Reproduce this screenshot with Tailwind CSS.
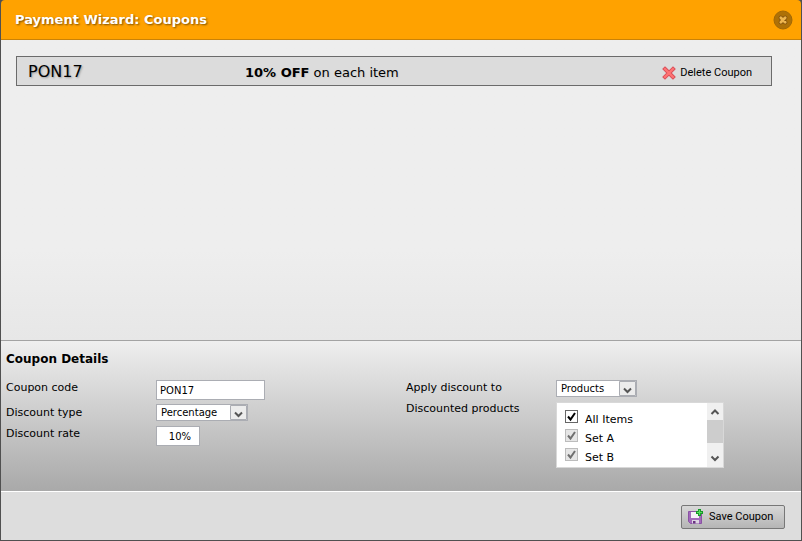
<!DOCTYPE html>
<html lang="en">
<head>
<meta charset="utf-8">
<title>Payment Wizard: Coupons</title>
<script src="https://cdn.jsdelivr.net/npm/@tailwindcss/browser@4"></script>
</head>
<body class="min-h-screen bg-[#505050] font-['Verdana','DejaVu_Sans',sans-serif] text-black">
<div class="flex min-h-screen flex-col px-px pb-px">
  <header class="flex h-10 items-center justify-between rounded-t border-b border-[#c98208] bg-[#ffa200] pr-2 pl-3.5">
    <h1 class="text-[13px] font-bold text-white [text-shadow:1px_1px_2px_#7a4d00]">Payment Wizard: Coupons</h1>
    <button type="button" aria-label="Close" class="size-5">
      <svg viewBox="0 0 20 20" class="size-5"><circle cx="10" cy="10" r="9" fill="#ae7107" stroke="#a16806"/><path d="M7.800 7.800l4.400 4.400M12.200 7.800l-4.400 4.400" stroke="#80500a" stroke-width="4.400" stroke-linecap="round"/><path d="M7.800 7.800l4.400 4.400M12.200 7.800l-4.400 4.400" stroke="#eeb54e" stroke-width="2.800" stroke-linecap="round"/></svg>
    </button>
  </header>

  <main class="flex-1 bg-linear-to-b from-[#eeeeee] from-70% to-[#e7e7e7] pt-4 pr-[29px] pl-[15px]">
    <div class="flex h-[30px] items-center border border-[#6b6b6b] bg-[#dcdcdc] pr-[19px] pl-[11px]">
      <span class="w-[217px] pt-px text-base [text-shadow:1px_1px_2px_#999]">PON17</span>
      <span class="flex-1 pt-1 text-[13px] [text-shadow:1px_1px_1px_#ccc]"><b>10% OFF</b> on each item</span>
      <button type="button" class="flex items-center gap-1 pt-1 font-['Roboto',Arial,sans-serif] text-[11px]">
        <svg viewBox="0 0 14 14" class="size-3.5"><path d="M3 3l8 8M11 3l-8 8" stroke="#d9505a" stroke-width="4" stroke-linecap="square"/><path d="M3 3l8 8M11 3l-8 8" stroke="#ff7474" stroke-width="2.200" stroke-linecap="square"/></svg>
        Delete Coupon
      </button>
    </div>
  </main>

  <section class="h-[151px] border-t border-[#a3a3a3] bg-linear-to-b from-[#efefef] to-[#a9a9a9] px-[5px] pt-2.5">
    <h2 class="text-xs leading-4 font-bold">Coupon Details</h2>
    <div class="flex pt-3 text-[11px]">
      <div class="grid w-[400px] auto-rows-min grid-cols-[150px_auto] items-start justify-start gap-y-1">
        <label for="code" class="pt-px leading-4">Coupon code</label>
        <input id="code" value="PON17" class="mt-px h-5 w-[109px] border border-[#abadb3] bg-white px-[3px] text-[10px]">
        <label for="type" class="pt-px leading-4">Discount type</label>
        <div class="grid w-[92px] grid-cols-[1fr_19px]">
          <select id="type" class="col-span-2 col-start-1 row-start-1 h-[17px] appearance-none border border-[#abadb3] bg-white pt-px pl-1 text-[10px] leading-3"><option>Percentage</option><option>Fixed amount</option></select>
          <svg viewBox="0 0 19 17" class="pointer-events-none col-start-2 row-start-1 h-[17px] w-[19px]"><path d="M1.500 1.500h16v14h-16z" fill="#ececec" stroke="#abadb3"/><path d="M6 8.500l3.500 3.500 3.500-3.500" fill="none" stroke="#555" stroke-width="2"/></svg>
        </div>
        <label for="rate" class="pt-px leading-4">Discount rate</label>
        <input id="rate" value="10%" class="mt-px h-5 w-11 border border-[#abadb3] bg-white px-2 pt-px text-right text-[10px]">
      </div>

      <div class="grid auto-rows-min grid-cols-[150px_auto] items-start gap-y-[5px]">
        <label for="apply" class="pt-px leading-4">Apply discount to</label>
        <div class="mt-px grid w-[81px] grid-cols-[1fr_19px]">
          <select id="apply" class="col-span-2 col-start-1 row-start-1 h-[17px] appearance-none border border-[#abadb3] bg-white pt-px pl-1 text-[10px] leading-3"><option>Products</option><option>Order</option></select>
          <svg viewBox="0 0 19 17" class="pointer-events-none col-start-2 row-start-1 h-[17px] w-[19px]"><path d="M1.500 1.500h16v14h-16z" fill="#ececec" stroke="#abadb3"/><path d="M6 8.500l3.500 3.500 3.500-3.500" fill="none" stroke="#555" stroke-width="2"/></svg>
        </div>
        <span id="products" class="pt-px leading-3">Discounted products</span>
        <div role="group" aria-labelledby="products" class="flex h-[66px] w-[168px] border border-[#d8d8d8] bg-white">
          <div class="flex-1 overflow-hidden pt-[7px] pl-2">
            <label class="flex h-[19px] gap-[7px]">
              <span class="grid size-[13px]"><input type="checkbox" checked class="col-start-1 row-start-1 size-[13px] appearance-none border border-[#666] bg-white"><svg viewBox="0 0 13 13" class="pointer-events-none col-start-1 row-start-1 size-[13px]"><path d="M3 6.500l2.500 3L10 3" fill="none" stroke="#000" stroke-width="2"/></svg></span>
              <span class="pt-0.5">All Items</span>
            </label>
            <label class="flex h-[19px] gap-[7px]">
              <span class="grid size-[13px]"><input type="checkbox" checked disabled class="col-start-1 row-start-1 size-[13px] appearance-none border border-[#bcbcbc] bg-[#e6e6e6]"><svg viewBox="0 0 13 13" class="pointer-events-none col-start-1 row-start-1 size-[13px]"><path d="M3 6.500l2.500 3L10 3" fill="none" stroke="#707070" stroke-width="2"/></svg></span>
              <span class="pt-0.5">Set A</span>
            </label>
            <label class="flex h-[19px] gap-[7px]">
              <span class="grid size-[13px]"><input type="checkbox" checked disabled class="col-start-1 row-start-1 size-[13px] appearance-none border border-[#bcbcbc] bg-[#e6e6e6]"><svg viewBox="0 0 13 13" class="pointer-events-none col-start-1 row-start-1 size-[13px]"><path d="M3 6.500l2.500 3L10 3" fill="none" stroke="#707070" stroke-width="2"/></svg></span>
              <span class="pt-0.5">Set B</span>
            </label>
          </div>
          <div class="flex w-4 flex-col bg-[#f0f0f0]" aria-hidden="true">
            <svg viewBox="0 0 16 17" class="h-[17px] w-4"><path d="M4.500 11L8 7.500l3.500 3.500" fill="none" stroke="#555" stroke-width="2"/></svg>
            <div class="h-[23px] bg-[#cdcdcd]"></div>
            <svg viewBox="0 0 16 17" class="mt-auto h-[17px] w-4"><path d="M4.500 6.500L8 10l3.500-3.500" fill="none" stroke="#555" stroke-width="2"/></svg>
          </div>
        </div>
      </div>
    </div>
  </section>

  <footer class="flex h-[49px] items-center justify-end border-t border-white bg-[#dddddd] pr-4 pt-0.5">
    <button type="button" class="flex h-6 w-[104px] items-center gap-1.5 rounded-xs border border-[#777] bg-linear-to-b from-[#d8d8d8] to-[#b5b5b5] pl-[5px] font-['Roboto',Arial,sans-serif] text-[11px] whitespace-nowrap">
      <svg viewBox="0 0 16 16" class="size-4 shrink-0"><path d="M1.500 2.500h13v12h-11l-2-2z" fill="#a269bb" stroke="#8a52a4"/><path d="M4 3h8v6H4z" fill="#f5f1f7"/><path d="M5 11h7v3.500H5z" fill="#ddd5e2"/><path d="M6 12h2.500v2.500H6z" fill="#693381"/><path d="M12.500 0v7M9 3.500h7" stroke="#159a27" stroke-width="3"/><path d="M12.500 1v5M10 3.500h5" stroke="#58dc60" stroke-width="1.200"/></svg>
      Save Coupon
    </button>
  </footer>
</div>
</body>
</html>
